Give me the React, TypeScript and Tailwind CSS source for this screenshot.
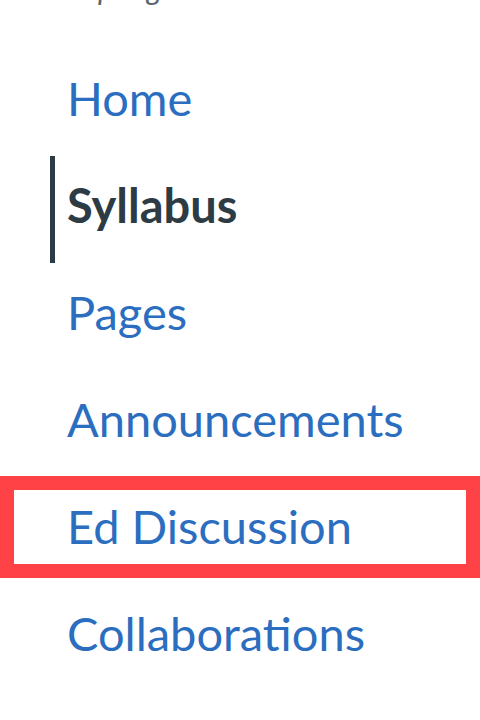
import React from 'react';

const items = [
  { label: 'Home' },
  { label: 'Syllabus', active: true },
  { label: 'Pages' },
  { label: 'Announcements' },
  { label: 'Ed Discussion', highlight: true },
  { label: 'Collaborations' },
];

const App: React.FC = () => {
  return (
    <div className="w-[480px] h-[720px] overflow-hidden bg-white" style={{ fontFamily: 'Lato, "Open Sans", sans-serif' }}>
      {/* term label, cut off by the screenshot */}
      <div className="h-[49px] overflow-hidden">
        <div className="mt-[-27px] pl-[83px] text-[30px] leading-none italic text-[#5b6670]">Spring 2024</div>
      </div>

      <nav className="flex flex-col">
        {items.map((item) => (
          <div key={item.label} className="relative h-[107px]">
            {item.active && <div className="absolute left-[50px] top-0 h-full w-[5px] bg-[#2d3b45]" />}
            {item.highlight && (
              <div className="absolute left-0 right-0 top-[-1px] h-[102px] border-[14px] border-[#fe4246]" />
            )}
            <div
              className={
                'pl-[67px] pt-[26px] text-[47px] leading-[47px] ' +
                (item.active ? 'font-bold text-[#2d3b45]' : 'text-[#2b6ec0]')
              }
            >
              {item.label}
            </div>
          </div>
        ))}
      </nav>
    </div>
  );
};

export default App;
